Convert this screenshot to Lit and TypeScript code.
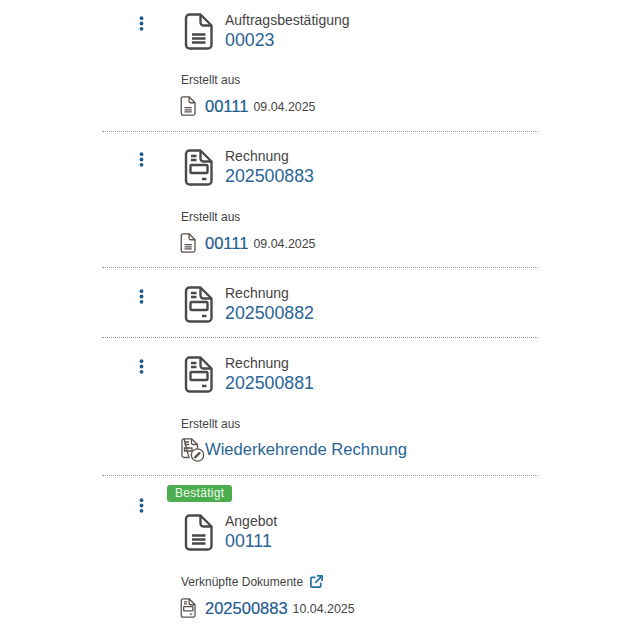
import { LitElement, html, css, svg } from "lit";
import { customElement } from "lit/decorators.js";

const outline = svg`<path d="M5.500 1.500H16.500L27.500 12.500V32A3.500 3.500 0 0 1 24 35.500H5.500A3.500 3.500 0 0 1 2 32V5A3.500 3.500 0 0 1 5.500 1.500Z"/><path d="M16.500 1.500V9.500A3 3 0 0 0 19.500 12.500H27.500"/>`;
const quoteLines = svg`<path d="M8 21.500H21.500M8 25.500H21.500M8 29.500H21.500"/>`;
const invoiceLines = svg`<path d="M7 7H12.500M7 11H12.500M18 30H22.500"/><rect x="6.500" y="16" width="17" height="8" rx="1"/>`;

function docIcon(kind: "doc" | "inv", cls: string) {
  return html`<svg class=${cls} viewBox="0 0 29 37" fill="none" stroke="currentColor" stroke-width="2.400" stroke-linejoin="round">
    ${outline}${kind === "doc" ? quoteLines : invoiceLines}
  </svg>`;
}

const recurIcon = html`<svg class="small recur" viewBox="0 0 24 24" fill="none" stroke="currentColor" stroke-width="1.300">
  <path d="M3 .8H10.500L16.500 6.500V11M8 19.500H3A2 2 0 0 1 1 17.500V2.800A2 2 0 0 1 3 .8Z"/>
  <path d="M10.500 .8V5A1.500 1.500 0 0 0 12 6.500H16.500M3.500 4H8M3.500 6.500H8M3.500 10H11V13H3.500Z"/>
  <circle cx="16.500" cy="17" r="6.200" fill="#fff"/>
  <path d="M13.500 20L19 14.500" stroke-width="2.400"/>
</svg>`;

const kebab = html`<svg class="kebab" viewBox="0 0 5 15" fill="#1f5c8f"><circle cx="2.500" cy="2.200" r="1.900"/><circle cx="2.500" cy="7.500" r="1.900"/><circle cx="2.500" cy="12.800" r="1.900"/></svg>`;

const extIcon = html`<svg class="ext" viewBox="0 0 14 14" fill="none" stroke="#1f6fa8" stroke-width="1.800">
  <path d="M6 2.500H2A1 1 0 0 0 1 3.500V12A1 1 0 0 0 2 13H10.500A1 1 0 0 0 11.500 12V8"/>
  <path d="M5.500 8.500L12.500 1.500M7.500 1H13V6.500"/>
</svg>`;

interface Sub { title: string; ext?: boolean; icon: "doc" | "inv" | "recur"; num: string; date?: string; }
interface Row { kind: "doc" | "inv"; label: string; num: string; badge?: string; sub?: Sub; }

const rows: Row[] = [
  { kind: "doc", label: "Auftragsbestätigung", num: "00023", sub: { title: "Erstellt aus", icon: "doc", num: "00111", date: "09.04.2025" } },
  { kind: "inv", label: "Rechnung", num: "202500883", sub: { title: "Erstellt aus", icon: "doc", num: "00111", date: "09.04.2025" } },
  { kind: "inv", label: "Rechnung", num: "202500882" },
  { kind: "inv", label: "Rechnung", num: "202500881", sub: { title: "Erstellt aus", icon: "recur", num: "Wiederkehrende Rechnung" } },
  { kind: "doc", label: "Angebot", num: "00111", badge: "Bestätigt", sub: { title: "Verknüpfte Dokumente", ext: true, icon: "inv", num: "202500883", date: "10.04.2025" } },
];

@customElement("app-root")
export class AppRoot extends LitElement {
  static styles = css`
    :host { display: block; height: 628px; overflow: hidden; background: #fff; font-family: "Liberation Sans", Arial, sans-serif; color: #444; }
    .list { margin: -4.400px 90px 0 102px; }
    .row { display: flex; padding: 17.400px 0 14.600px; border-bottom: 1px dotted #999; }
    .row:last-child { border-bottom: 0; padding-top: 9px; }
    .side { width: 65px; flex: none; box-sizing: border-box; padding: 3px 0 0 37px; }
    .kebab { display: block; width: 5px; height: 15px; }
    .has-badge .side { padding-top: 13px; }
    .main { flex: 1; min-width: 0; }
    .badge { display: inline-block; height: 17px; line-height: 17px; padding: 0 8px; background: #4cae4f; color: #eef8ee; border-radius: 3px; font-size: 12px; letter-spacing: .3px; margin-bottom: 12px; vertical-align: top; }
    .head { display: flex; padding-left: 17px; gap: 12px; height: 37px; }
    .big { width: 29px; height: 37px; flex: none; color: #4a4a4a; }
    .label { font-size: 14px; line-height: 15px; color: #444; }
    .num { font-size: 17.800px; line-height: 22px; color: #2a6496; margin-top: 1px; }
    .sub { padding: 22.400px 0 0 14px; }
    .title { display: flex; align-items: center; gap: 7px; font-size: 12px; line-height: 16px; color: #444; }
    .tall-title { padding-top: .6px; }
    .ext { width: 13px; height: 13px; }
    .link { display: flex; align-items: center; margin-top: 8px; height: 20px; }
    .link.tall { margin-top: 8px; height: 21px; }
    .small { width: 16px; height: 20px; flex: none; color: #5a534d; margin: 0 9px 0 -1px; }
    .small.recur { width: 24px; height: 24px; margin: 0; }
    .lnum { font-size: 16.500px; color: #1f5c8f; line-height: 20px; -webkit-text-stroke: .2px #1f5c8f; }
    .lnum.long { -webkit-text-stroke: 0; color: #2a6496; font-size: 16.600px; }
    .date { font-size: 12.400px; color: #444; margin-left: 5px; padding-top: 2px; }
  `;

  render() {
    return html`<div class="list">
      ${rows.map((r) => html`<div class="row ${r.badge ? "has-badge" : ""}">
        <div class="side">${kebab}</div>
        <div class="main">
          ${r.badge ? html`<div><span class="badge">${r.badge}</span></div>` : ""}
          <div class="head">
            ${docIcon(r.kind, "big")}
            <div><div class="label">${r.label}</div><div class="num">${r.num}</div></div>
          </div>
          ${r.sub ? html`<div class="sub">
            <div class="title ${r.sub.icon === "recur" ? "tall-title" : ""}">${r.sub.title}${r.sub.ext ? extIcon : ""}</div>
            <div class="link ${r.sub.icon === "recur" ? "tall" : ""}">
              ${r.sub.icon === "recur" ? recurIcon : docIcon(r.sub.icon, "small")}
              <span class="lnum ${r.sub.date ? "" : "long"}">${r.sub.num}</span>
              ${r.sub.date ? html`<span class="date">${r.sub.date}</span>` : ""}
            </div>
          </div>` : ""}
        </div>
      </div>`)}
    </div>`;
  }
}
